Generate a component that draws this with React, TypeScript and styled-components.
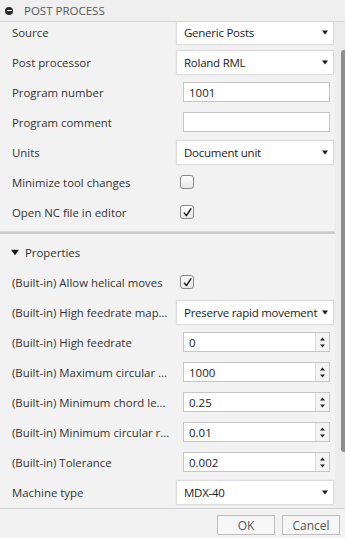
import React from 'react';
import styled, { createGlobalStyle } from 'styled-components';

const GlobalStyle = createGlobalStyle`
  html, body {
    margin: 0;
    padding: 0;
    background: #f2f2f2;
  }
  body {
    font-family: "Open Sans", "Liberation Sans", sans-serif;
    font-size: 11px;
    color: #333;
  }
`;

type Control =
  | { kind: 'select'; value: string }
  | { kind: 'text'; value: string }
  | { kind: 'number'; value: string }
  | { kind: 'check'; checked: boolean };

interface Field {
  label: string;
  control: Control;
}

const postFields: Field[] = [
  { label: 'Source', control: { kind: 'select', value: 'Generic Posts' } },
  { label: 'Post processor', control: { kind: 'select', value: 'Roland RML' } },
  { label: 'Program number', control: { kind: 'text', value: '1001' } },
  { label: 'Program comment', control: { kind: 'text', value: '' } },
  { label: 'Units', control: { kind: 'select', value: 'Document unit' } },
  { label: 'Minimize tool changes', control: { kind: 'check', checked: false } },
  { label: 'Open NC file in editor', control: { kind: 'check', checked: true } },
];

const propertyFields: Field[] = [
  { label: '(Built-in) Allow helical moves', control: { kind: 'check', checked: true } },
  { label: '(Built-in) High feedrate map...', control: { kind: 'select', value: 'Preserve rapid movement' } },
  { label: '(Built-in) High feedrate', control: { kind: 'number', value: '0' } },
  { label: '(Built-in) Maximum circular ...', control: { kind: 'number', value: '1000' } },
  { label: '(Built-in) Minimum chord le...', control: { kind: 'number', value: '0.25' } },
  { label: '(Built-in) Minimum circular r...', control: { kind: 'number', value: '0.01' } },
  { label: '(Built-in) Tolerance', control: { kind: 'number', value: '0.002' } },
  { label: 'Machine type', control: { kind: 'select', value: 'MDX-40' } },
];

const DownArrow: React.FC<{ size?: number }> = ({ size = 5 }) => (
  <svg width={size + 1} height={size} viewBox="0 0 6 5">
    <path d="M0 0.5 H6 L3 4.5 Z" fill="#1a1a1a" />
  </svg>
);

const CheckMark: React.FC = () => (
  <svg width="11" height="11" viewBox="0 0 11 11">
    <path d="M2 5.6 L4.4 8.6 L9.2 1.4" fill="none" stroke="#111" strokeWidth="1.4" strokeLinejoin="round" />
  </svg>
);

const Spinner: React.FC = () => (
  <StyledSpinner>
    <svg width="5" height="4" viewBox="0 0 5 4">
      <path d="M0 3.6 H5 L2.5 0.4 Z" fill="#222" />
    </svg>
    <svg width="5" height="4" viewBox="0 0 5 4">
      <path d="M0 0.4 H5 L2.5 3.6 Z" fill="#222" />
    </svg>
  </StyledSpinner>
);

const FieldRow: React.FC<{ field: Field }> = ({ field }) => {
  const { control } = field;
  return (
    <StyledRow>
      <StyledLabel>{field.label}</StyledLabel>
      {control.kind === 'select' && (
        <StyledSelect>
          <span>{control.value}</span>
          <DownArrow />
        </StyledSelect>
      )}
      {control.kind === 'text' && <StyledInput>{control.value}</StyledInput>}
      {control.kind === 'number' && (
        <StyledInput>
          <StyledValue>{control.value}</StyledValue>
          <Spinner />
        </StyledInput>
      )}
      {control.kind === 'check' && (
        <StyledCheckbox>{control.checked && <CheckMark />}</StyledCheckbox>
      )}
    </StyledRow>
  );
};

const App: React.FC = () => {
  return (
    <>
      <GlobalStyle />
      <StyledPanel>
        <StyledHeader>
          <StyledCollapseIcon />
          <StyledHeaderTitle>POST PROCESS</StyledHeaderTitle>
        </StyledHeader>
        <StyledBody>
          <StyledContent>
            <StyledList>
              {postFields.map((f) => (
                <FieldRow key={f.label} field={f} />
              ))}
              <StyledSeparator />
              <StyledGroupTitle>
                <DownArrow size={7} />
                <span>Properties</span>
              </StyledGroupTitle>
              {propertyFields.map((f) => (
                <FieldRow key={f.label} field={f} />
              ))}
            </StyledList>
          </StyledContent>
          <StyledScrollTrack>
            <StyledScrollThumb />
          </StyledScrollTrack>
        </StyledBody>
        <StyledFooter>
          <StyledButton>OK</StyledButton>
          <StyledButton>Cancel</StyledButton>
        </StyledFooter>
      </StyledPanel>
    </>
  );
};

const StyledPanel = styled.div`
  width: 345px;
  height: 538px;
  display: flex;
  flex-direction: column;
  background: #f2f2f2;
  overflow: hidden;
`;

const StyledHeader = styled.div`
  height: 21px;
  flex: none;
  display: flex;
  align-items: center;
  gap: 11px;
  padding-left: 5px;
  background: #efefef;
  border-bottom: 1px solid #d4d4d4;
  position: relative;
  z-index: 1;
`;

const StyledCollapseIcon = styled.div`
  width: 8px;
  height: 8px;
  border-radius: 50%;
  background: #2b2b2b;
  display: flex;
  align-items: center;
  justify-content: center;
  &::after {
    content: '';
    width: 5px;
    height: 1.5px;
    background: #fff;
  }
`;

const StyledHeaderTitle = styled.span`
  font-size: 11.5px;
  color: #585858;
`;

const StyledBody = styled.div`
  flex: 1;
  display: flex;
  min-height: 0;
`;

const StyledContent = styled.div`
  width: 335px;
  overflow: hidden;
`;

const StyledList = styled.div`
  display: flex;
  flex-direction: column;
  margin-top: -5px;
`;

const StyledRow = styled.div`
  height: 30px;
  display: flex;
  align-items: center;
  padding-left: 12px;
`;

const StyledLabel = styled.div`
  width: 164px;
  flex: none;
  white-space: nowrap;
  overflow: hidden;
  color: #333;
  font-size: 11.4px;
`;

const StyledSelect = styled.div`
  width: 158px;
  height: 25px;
  box-sizing: border-box;
  display: flex;
  align-items: center;
  justify-content: space-between;
  padding: 0 5px 0 7px;
  background: #fff;
  border: 1px solid #dcdcdc;
  box-shadow: 0 0 1px rgba(0, 0, 0, 0.12);
  font-size: 11.5px;
  letter-spacing: -0.25px;
  color: #1c1c1c;
  white-space: nowrap;
`;

const StyledInput = styled.div`
  width: 147px;
  height: 20px;
  box-sizing: border-box;
  margin-left: 7px;
  display: flex;
  align-items: center;
  padding-left: 5px;
  background: #fff;
  border: 1px solid #c6c6c6;
  font-size: 11.5px;
  color: #1c1c1c;
`;

const StyledValue = styled.span`
  flex: 1;
`;

const StyledSpinner = styled.div`
  width: 14px;
  height: 100%;
  display: flex;
  flex-direction: column;
  align-items: center;
  justify-content: space-around;
  padding: 2px 0;
  box-sizing: border-box;
  background: #f4f4f4;
  border-left: 1px solid #dedede;
`;

const StyledCheckbox = styled.div`
  width: 12px;
  height: 12px;
  margin-left: 4px;
  display: flex;
  align-items: center;
  justify-content: center;
  border: 1px solid #8a8a8a;
  border-radius: 3px;
  background: linear-gradient(#fdfdfd, #e6e6e6);
`;

const StyledSeparator = styled.div`
  height: 3px;
  margin: 4px 0 3px;
  background: #cbcbcb;
  border-top: 1px solid #d9d9d9;
  box-sizing: border-box;
`;

const StyledGroupTitle = styled.div`
  height: 30px;
  display: flex;
  align-items: center;
  gap: 6px;
  padding-left: 11px;
  font-size: 11.4px;
  color: #333;
`;

const StyledScrollTrack = styled.div`
  width: 10px;
  flex: none;
  background: #ececec;
  padding: 28px 0 0 6px;
  box-sizing: border-box;
`;

const StyledScrollThumb = styled.div`
  width: 4px;
  height: 402px;
  background: #8e8e8e;
  border-radius: 3px 0 0 3px;
`;

const StyledFooter = styled.div`
  height: 23px;
  flex: none;
  display: flex;
  align-items: flex-start;
  justify-content: flex-end;
  gap: 7px;
  padding: 6px 5px 0 0;
  border-top: 1px solid #d0d0d0;
  background: #f2f2f2;
`;

const StyledButton = styled.div`
  width: 58px;
  height: 20px;
  box-sizing: border-box;
  display: flex;
  align-items: center;
  justify-content: center;
  background: #f6f6f6;
  border: 1px solid #bdbdbd;
  font-size: 12px;
  color: #555;
`;

export default App;
